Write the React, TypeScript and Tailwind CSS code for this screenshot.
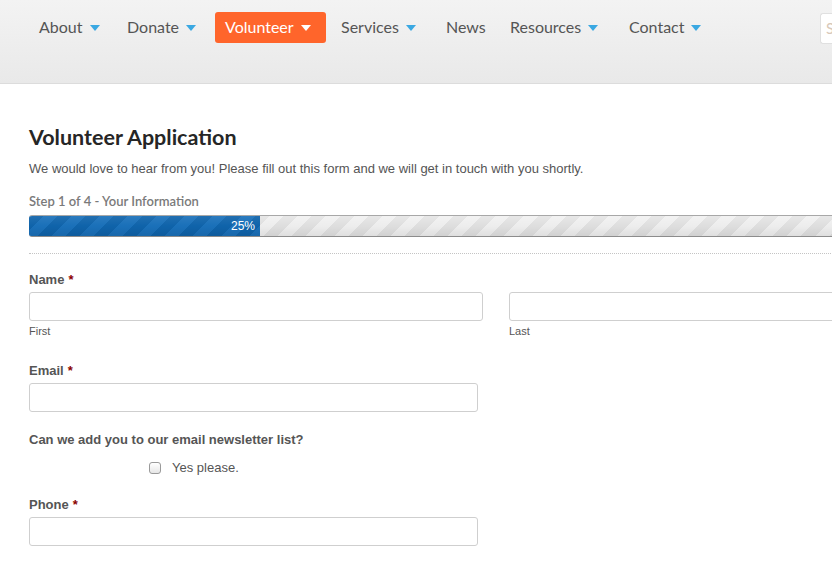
import React from 'react'

const navItems = [
  { label: 'About', drop: true, w: 'w-[88px]' },
  { label: 'Donate', drop: true, w: 'w-[98px]' },
  { label: 'Volunteer', drop: true, active: true, w: 'w-[111px]' },
  { label: 'Services', drop: true, w: 'w-[105px] ml-[5px]' },
  { label: 'News', drop: false, w: 'w-[64px]' },
  { label: 'Resources', drop: true, w: 'w-[119px]' },
  { label: 'Contact', drop: true, w: 'w-[100px]' },
]

function Caret({ white }: { white?: boolean }) {
  return (
    <svg width="10" height="6" viewBox="0 0 10 6" className="ml-[7px] mt-[1px]">
      <path d="M0 0h10L5 6z" fill={white ? '#ffffff' : '#3aa8e2'} />
    </svg>
  )
}

function Label({ text, req }: { text: string; req?: boolean }) {
  return (
    <div className="text-[13px] font-bold text-[#555] leading-[16px] font-['Liberation_Sans',Arial,sans-serif]">
      {text}
      {req && <span className="text-[#8b0000] ml-[4px]">*</span>}
    </div>
  )
}

function Input({ w }: { w: string }) {
  return <input className={`${w} h-[29px] border border-[#cfcfcf] rounded-[3px] bg-white outline-none`} />
}

export default function App() {
  return (
    <div className="w-[832px] h-[562px] overflow-hidden bg-white font-['Liberation_Sans',Arial,sans-serif]">
      <header className="h-[84px] w-full bg-gradient-to-b from-[#f3f3f3] to-[#e9e9e9] border-b border-[#dcdcdc] flex items-start">
        <nav className="flex items-center pl-[29px] pt-[12px] font-['Lato',sans-serif] text-[16px] leading-[20px]">
          {navItems.map((item) => (
            <div
              key={item.label}
              className={`${item.w} shrink-0 flex items-center h-[31px] pb-[1px] px-[10px] rounded-[3px] ${
                item.active ? 'bg-[#ff652b] text-white' : 'text-[#555]'
              }`}
            >
              <span>{item.label}</span>
              {item.drop && <Caret white={item.active} />}
            </div>
          ))}
        </nav>
        <div className="ml-auto mt-[13px] w-[12px] h-[31px] overflow-hidden bg-white border border-[#e0e0e0] border-r-0 rounded-l-[3px] flex items-center pl-[5px] text-[15px] text-[#d8c8b8] font-['Lato',sans-serif]">
          S
        </div>
      </header>

      <main className="pl-[29px] w-[970px]">
        <h1 className="mt-[40px] text-[21.5px] leading-[26px] font-bold text-[#262626] font-['Lato',sans-serif]">
          Volunteer Application
        </h1>
        <p className="mt-[11px] text-[13px] leading-[16px] text-[#555]">
          We would love to hear from you! Please fill out this form and we will get in touch with you shortly.
        </p>

        <div className="mt-[17px] text-[13px] leading-[15px] font-semibold text-[#7a7a7a] font-['Lato',sans-serif]">
          Step 1 of 4 - Your Information
        </div>
        <div className="mt-[6px] w-[924px] h-[22px] flex border-t border-t-[#a8a8a8] border-b border-b-[#8c8c8c] rounded-l-[3px] overflow-hidden bg-[linear-gradient(to_bottom,rgba(255,255,255,0.3),rgba(255,255,255,0)_50%,rgba(0,0,0,0.06)),repeating-linear-gradient(135deg,#dedede_0_10px,#ededed_10px_20px)]">
          <div className="w-[231px] h-full flex items-center justify-end pr-[5px] text-[12px] text-white bg-[linear-gradient(to_bottom,rgba(255,255,255,0.08),rgba(255,255,255,0)_50%,rgba(0,0,0,0.08)),repeating-linear-gradient(135deg,#0f63aa_0_10px,#1a70b9_10px_20px)]">
            25%
          </div>
        </div>

        <div className="mt-[16px] w-[924px] border-t border-dotted border-[#c4c4c4]" />

        <div className="mt-[18px]">
          <Label text="Name" req />
          <div className="mt-[4px] flex gap-[26px]">
            <div>
              <Input w="w-[454px]" />
              <div className="mt-[3px] text-[11px] leading-[14px] text-[#555]">First</div>
            </div>
            <div>
              <Input w="w-[454px]" />
              <div className="mt-[3px] text-[11px] leading-[14px] text-[#555]">Last</div>
            </div>
          </div>
        </div>

        <div className="mt-[25px]">
          <Label text="Email" req />
          <div className="mt-[4px]">
            <Input w="w-[449px]" />
          </div>
        </div>

        <div className="mt-[20px]">
          <Label text="Can we add you to our email newsletter list?" />
          <label className="mt-[10px] ml-[120px] flex items-center gap-[11px] text-[13px] text-[#555]">
            <span className="w-[12px] h-[12px] rounded-[3px] border border-[#9a9a9a] bg-gradient-to-b from-white to-[#e6e6e6]" />
            Yes please.
          </label>
        </div>

        <div className="mt-[19px]">
          <Label text="Phone" req />
          <div className="mt-[4px]">
            <Input w="w-[449px]" />
          </div>
        </div>
      </main>
    </div>
  )
}
